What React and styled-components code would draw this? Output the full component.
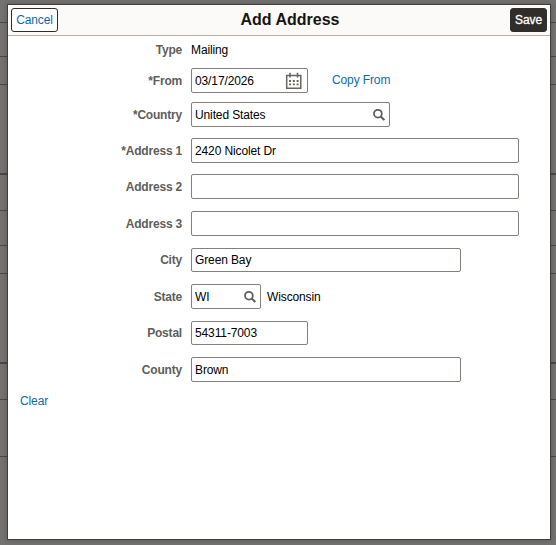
import React from 'react';
import styled, { createGlobalStyle } from 'styled-components';

const GlobalStyle = createGlobalStyle`
  * {
    box-sizing: border-box;
  }
  body {
    margin: 0;
    font-family: 'Liberation Sans', Arial, sans-serif;
    font-size: 12px;
    letter-spacing: -0.12px;
    color: #000;
  }
`;

const Page = styled.div`
  position: relative;
  height: 545px;
  overflow: hidden;
  background: #747372;
`;
const PageRow = styled.div`
  height: ${({ $height }) => $height}px;
  border-bottom: ${({ $line }) => $line || 1}px solid #4b4a49;
`;
const Dialog = styled.div`
  position: absolute;
  top: 4px;
  left: 7px;
  width: 544px;
  height: 536px;
  background: #fff;
  border: 1px solid #3f3e3d;
  box-shadow: 0 0 6px rgba(0, 0, 0, 0.25);
`;
const Header = styled.header`
  display: flex;
  align-items: center;
  height: 31px;
  padding: 0 3px;
  background: #fcfaf8;
  border-bottom: 1px solid #b3b1af;
`;
const Title = styled.h1`
  flex: 1;
  margin: 0;
  padding-left: 12px;
  text-align: center;
  font-size: 16px;
  line-height: 18px;
  letter-spacing: 0;
  color: #161513;
`;
const Button = styled.button`
  height: 24px;
  padding: 0 4px;
  font: inherit;
  letter-spacing: inherit;
  line-height: 22px;
  border: 1px solid #312d2a;
  border-radius: 3px;
  color: ${({ $primary }) => ($primary ? '#fff' : '#0b69b0')};
  background: ${({ $primary }) => ($primary ? '#312d2a' : '#fff')};
  width: ${({ $primary }) => ($primary ? 37 : 47)}px;
  -webkit-text-stroke: ${({ $primary }) => ($primary ? '0.3px #fff' : '0')};
`;
const Form = styled.div`
  padding-top: 7px;
`;
const Field = styled.div`
  display: flex;
  align-items: center;
  height: ${({ $height }) => $height || 25}px;
  margin-bottom: ${({ $gap }) => $gap || 12}px;
`;
const Label = styled.label`
  width: 174px;
  margin-right: 9px;
  text-align: right;
  font-weight: bold;
  letter-spacing: -0.2px;
  color: #605e5c;
`;
const InputBox = styled.div`
  display: flex;
  align-items: center;
  width: ${({ $width }) => $width}px;
  height: 100%;
  padding: 0 4px 0 3px;
  border: 1px solid #85807b;
  border-radius: 2px;
`;
const Input = styled.input`
  flex: 1;
  min-width: 0;
  padding: 0;
  border: 0;
  outline: 0;
  font: inherit;
  letter-spacing: inherit;
  color: inherit;
  background: none;
`;
const Note = styled.span`
  margin-left: 6px;
`;
const Link = styled.a`
  margin-left: ${({ $left }) => $left}px;
  padding-bottom: ${({ $raise }) => $raise || 0}px;
  color: #0b69b0;
`;

const SearchIcon = () => (
  <svg width="12" height="12" viewBox="0 0 12 12" fill="none" stroke="#5f5f60">
    <circle cx="4.9" cy="4.7" r="3.9" strokeWidth="1.8" />
    <path d="M7.7 7.5L11.3 11.1" strokeWidth="2.1" />
  </svg>
);

const CalendarIcon = () => (
  <svg width="18" height="18" viewBox="0 0 18 18" fill="none" stroke="#68665f">
    <path d="M1.7 3.4H15.8V16.2H1.7Z" strokeWidth="1.5" />
    <path d="M5 0.8V5.6M12.5 0.8V5.6" strokeWidth="1.6" />
    <path
      d="M4 9H6M7.8 9H9.8M11.6 9H13.6M4 12.4H6M7.8 12.4H9.8M11.6 12.4H13.6"
      strokeWidth="1.8"
    />
  </svg>
);

function TextField({ label, value, width, height, gap, icon, children }) {
  return (
    <Field $height={height} $gap={gap}>
      <Label>{label}</Label>
      <InputBox $width={width}>
        <Input defaultValue={value} aria-label={label} />
        {icon}
      </InputBox>
      {children}
    </Field>
  );
}

export default function App() {
  return (
    <>
      <GlobalStyle />
      <Page>
        <PageRow $height={23} />
        <PageRow $height={34} />
        <PageRow $height={28} />
        <PageRow $height={90} $line={2} />
        <PageRow $height={36} />
        <PageRow $height={35} />
        <PageRow $height={28} />
        <PageRow $height={90} $line={2} />
        <PageRow $height={36} />
        <PageRow $height={57} />
        <Dialog>
          <Header>
            <Button>Cancel</Button>
            <Title>Add Address</Title>
            <Button $primary>Save</Button>
          </Header>
          <Form>
            <Field $height={14} $gap={11}>
              <Label>Type</Label>
              <span>Mailing</span>
            </Field>
            <TextField
              label="*From"
              value="03/17/2026"
              width={117}
              gap={9}
              icon={<CalendarIcon />}
            >
              <Link $left={24} $raise={2}>
                Copy From
              </Link>
            </TextField>
            <TextField
              label="*Country"
              value="United States"
              width={199}
              gap={11}
              icon={<SearchIcon />}
            />
            <TextField label="*Address 1" value="2420 Nicolet Dr" width={328} gap={11} />
            <TextField label="Address 2" value="" width={328} />
            <TextField label="Address 3" value="" width={328} />
            <TextField label="City" value="Green Bay" width={270} height={24} />
            <TextField label="State" value="WI" width={70} icon={<SearchIcon />}>
              <Note>Wisconsin</Note>
            </TextField>
            <TextField label="Postal" value="54311-7003" width={117} height={24} />
            <TextField label="County" value="Brown" width={270} />
            <Link $left={12}>Clear</Link>
          </Form>
        </Dialog>
      </Page>
    </>
  );
}
